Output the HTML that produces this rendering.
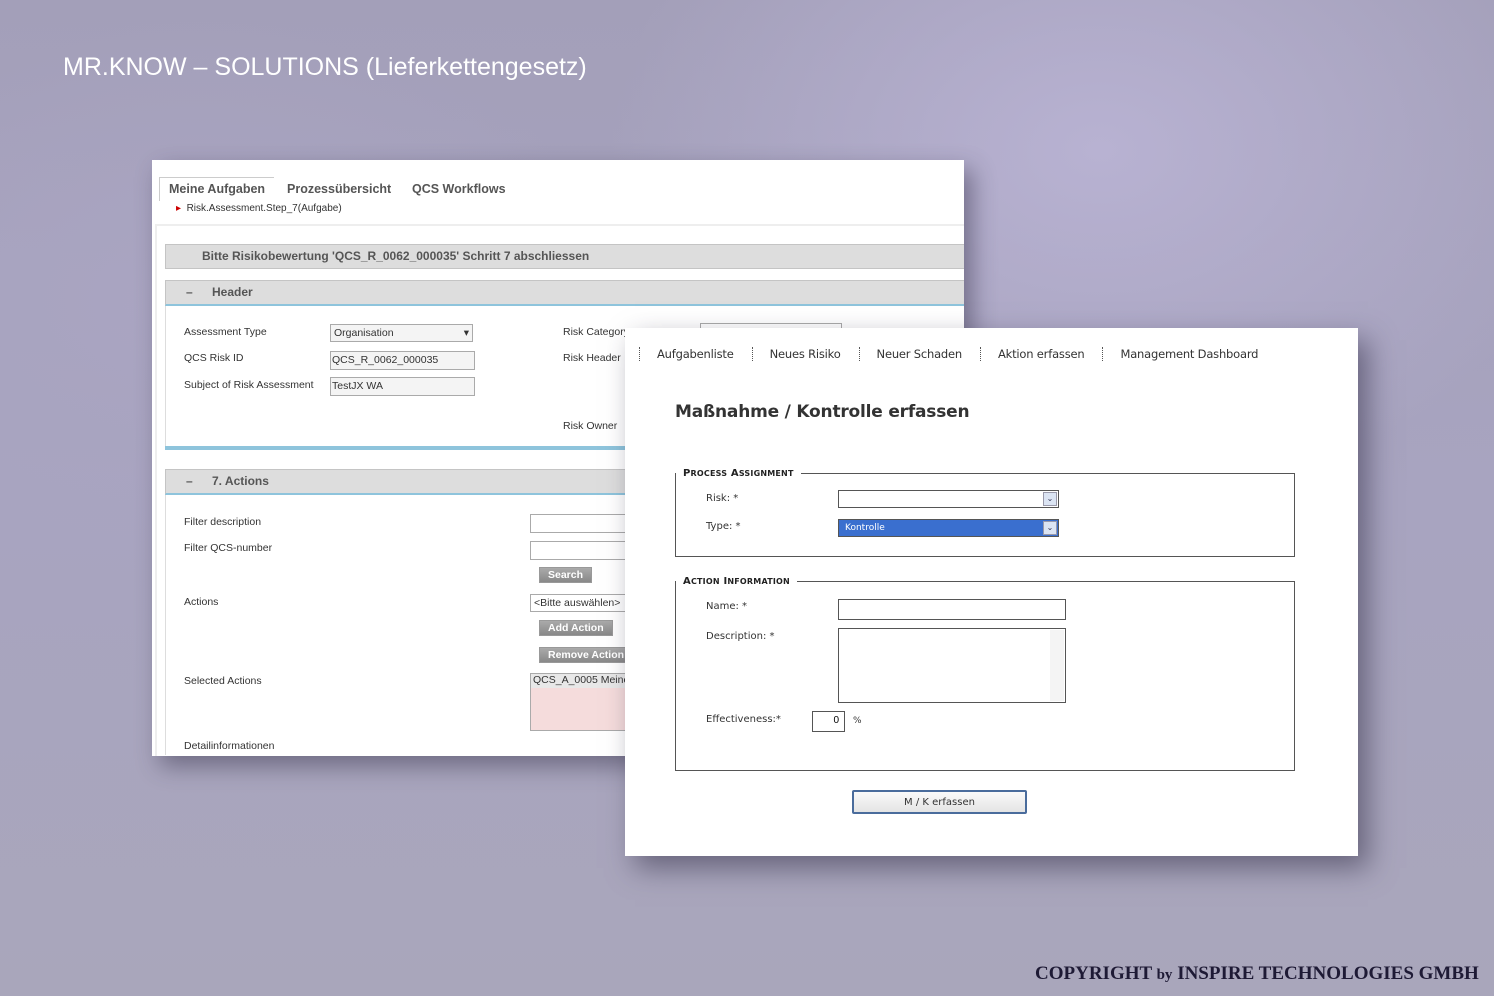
<!DOCTYPE html>
<html><head><meta charset="utf-8"><style>
*{margin:0;padding:0;box-sizing:border-box}
body{width:1494px;height:996px;overflow:hidden;position:relative;font-family:"Liberation Sans",sans-serif;
background:radial-gradient(ellipse 700px 500px at 1100px 150px,#b8b2d2 0%,rgba(184,178,210,0) 70%),
radial-gradient(ellipse 600px 400px at 200px 300px,#aaa5c2 0%,rgba(170,165,194,0) 70%),
linear-gradient(180deg,#a39fb9 0%,#a8a4c0 50%,#a9a6bb 100%);}
.a{position:absolute}
.t{color:#333;font-size:10.5px;font-family:"Liberation Sans",sans-serif}
.p1{left:152px;top:160px;width:812px;height:596px;background:#fff;box-shadow:8px 10px 22px rgba(40,35,60,.45);overflow:hidden}
.p2{left:625px;top:328px;width:733px;height:528px;background:#fff;box-shadow:10px 12px 26px rgba(40,35,60,.5)}
.inp{position:absolute;border:1px solid #aaa;background:#f4f4f4;font-size:10.5px;color:#333;padding:2px 3px;font-family:"Liberation Sans",sans-serif}
.btn{position:absolute;background:linear-gradient(#aaa,#888);color:#fff;font-weight:bold;font-size:10.5px;padding:1px 8px;border:1px solid #999}
.fs{position:absolute;border:1px solid #555;}
.lg{position:absolute;background:#fff;padding:0 7px;font-size:10px;font-weight:bold;color:#222;font-family:"DejaVu Sans",sans-serif;letter-spacing:.2px}
.w{font-family:"DejaVu Sans",sans-serif;font-size:11px;color:#333}
.sel{position:absolute;border:1px solid #555;background:#fff}
.arr{position:absolute;right:1px;top:1px;width:14px;height:14px;background:#dbe4f3;border:1px solid #99a;font-size:8px;color:#335;text-align:center;line-height:12px}
</style></head><body>
<div class="a" style="left:63px;top:53px;color:#fff;font-size:25px">MR.KNOW – SOLUTIONS (Lieferkettengesetz)</div>
<div class="a" style="left:1035px;top:963px;font-family:'Liberation Serif',serif;font-weight:bold;font-size:19px;color:#1e1a35;letter-spacing:0">COPYRIGHT <span style="font-size:15px">by</span> INSPIRE TECHNOLOGIES GMBH</div>

<div class="a p1">
 <div class="a" style="left:7px;top:17px;width:115px;height:24px;border-top:1px solid #ccc;border-left:1px solid #ccc"></div>
 <div class="a" style="left:17px;top:22px;font-size:12.5px;font-weight:bold;color:#555">Meine Aufgaben</div>
 <div class="a" style="left:135px;top:22px;font-size:12.5px;font-weight:bold;color:#555">Prozessübersicht</div>
 <div class="a" style="left:260px;top:22px;font-size:12.5px;font-weight:bold;color:#555">QCS Workflows</div>
 <div class="a" style="left:24px;top:43px;font-size:10px;color:#333"><span style="color:#c00">&#9656;</span>&nbsp; Risk.Assessment.Step_7(Aufgabe)</div>
 <div class="a" style="left:3px;top:64px;width:809px;height:2px;background:#eee"></div>
 <div class="a" style="left:3px;top:66px;width:2px;height:530px;background:#eee"></div>
 <div class="a" style="left:13px;top:84px;width:800px;height:25px;background:#ddd;border:1px solid #c4c4c4;font-size:12px;font-weight:bold;color:#555;padding:4px 0 0 36px">Bitte Risikobewertung 'QCS_R_0062_000035' Schritt 7 abschliessen</div>
 <div class="a" style="left:13px;top:120px;width:800px;height:26px;background:#ddd;border:1px solid #c4c4c4;border-bottom:2px solid #8ec4dc;font-size:12px;font-weight:bold;color:#555;padding:4px 0 0 20px"><span style="display:inline-block;width:26px">–</span>Header</div>
 <div class="a" style="left:13px;top:146px;width:1px;height:140px;background:#ddd"></div>
 <div class="a t" style="left:32px;top:166px">Assessment Type</div>
 <div class="a t" style="left:32px;top:192px">QCS Risk ID</div>
 <div class="a t" style="left:32px;top:219px">Subject of Risk Assessment</div>
 <div class="inp" style="left:178px;top:164px;width:143px;height:18px">Organisation<span style="float:right">▾</span></div>
 <div class="inp" style="left:178px;top:191px;width:145px;height:19px;padding-left:1px">QCS_R_0062_000035</div>
 <div class="inp" style="left:178px;top:217px;width:145px;height:19px;padding-left:1px">TestJX WA</div>
 <div class="a t" style="left:411px;top:166px">Risk Category</div>
 <div class="a t" style="left:411px;top:192px">Risk Header</div>
 <div class="a t" style="left:411px;top:260px">Risk Owner</div>
 <div class="a" style="left:548px;top:163px;width:142px;height:5px;border:1px solid #aaa;border-bottom:none"></div>
 <div class="a" style="left:13px;top:286px;width:800px;height:4px;background:#8ec4dc"></div>
 <div class="a" style="left:13px;top:309px;width:800px;height:26px;background:#ddd;border:1px solid #c4c4c4;border-bottom:2px solid #8ec4dc;font-size:12px;font-weight:bold;color:#555;padding:4px 0 0 20px"><span style="display:inline-block;width:26px">–</span>7. Actions</div>
 <div class="a" style="left:13px;top:335px;width:1px;height:260px;background:#ddd"></div>
 <div class="a t" style="left:32px;top:356px">Filter description</div>
 <div class="a t" style="left:32px;top:382px">Filter QCS-number</div>
 <div class="a t" style="left:32px;top:436px">Actions</div>
 <div class="a t" style="left:32px;top:515px">Selected Actions</div>
 <div class="a t" style="left:32px;top:580px">Detailinformationen</div>
 <div class="inp" style="left:378px;top:354px;width:120px;height:19px;background:#fff"></div>
 <div class="inp" style="left:378px;top:381px;width:120px;height:19px;background:#fff"></div>
 <div class="btn" style="left:387px;top:407px">Search</div>
 <div class="inp" style="left:378px;top:434px;width:120px;height:18px;background:#fff">&lt;Bitte auswählen&gt;</div>
 <div class="btn" style="left:387px;top:460px">Add Action</div>
 <div class="btn" style="left:387px;top:487px;width:100px">Remove Action</div>
 <div class="inp" style="left:378px;top:513px;width:120px;height:58px;background:linear-gradient(#e8e8e8 0,#e8e8e8 14px,#f5dcdc 14px);padding:0 2px">QCS_A_0005 Meine</div>
</div>

<div class="a p2">
 <div class="a w" style="left:14px;top:19px;width:100%;font-size:11.5px;letter-spacing:-.2px">
  <span style="border-left:1px dotted #555;padding:0 0 0 17px"></span>Aufgabenliste<span style="border-left:1px dotted #555;margin:0 17px 0 18px"></span>Neues Risiko<span style="border-left:1px dotted #555;margin:0 17px 0 18px"></span>Neuer Schaden<span style="border-left:1px dotted #555;margin:0 17px 0 18px"></span>Aktion erfassen<span style="border-left:1px dotted #555;margin:0 17px 0 18px"></span>Management Dashboard</div>
 <div class="a" style="left:50px;top:74px;font-family:'DejaVu Sans',sans-serif;font-weight:bold;font-size:17px;color:#333;letter-spacing:-.2px">Maßnahme / Kontrolle erfassen</div>
 <div class="fs" style="left:50px;top:145px;width:620px;height:84px"></div>
 <div class="lg" style="left:51px;top:140px">P<span style="font-size:8px">ROCESS</span> A<span style="font-size:8px">SSIGNMENT</span></div>
 <div class="a w" style="left:81px;top:165px;font-size:10px">Risk: *</div>
 <div class="a w" style="left:81px;top:193px;font-size:10px">Type: *</div>
 <div class="sel" style="left:213px;top:162px;width:221px;height:18px"><div class="arr">⌄</div></div>
 <div class="sel" style="left:213px;top:191px;width:221px;height:18px;background:#3a6fcf"><span style="color:#fff;font-size:9px;position:absolute;left:6px;top:3px;font-family:'DejaVu Sans',sans-serif">Kontrolle</span><div class="arr">⌄</div></div>
 <div class="fs" style="left:50px;top:253px;width:620px;height:190px"></div>
 <div class="lg" style="left:51px;top:248px">A<span style="font-size:8px">CTION</span> I<span style="font-size:8px">NFORMATION</span></div>
 <div class="a w" style="left:81px;top:273px;font-size:10px">Name: *</div>
 <div class="a w" style="left:81px;top:303px;font-size:10px">Description: *</div>
 <div class="a w" style="left:81px;top:386px;font-size:10px">Effectiveness:*</div>
 <div class="sel" style="left:213px;top:271px;width:228px;height:21px"></div>
 <div class="sel" style="left:213px;top:300px;width:228px;height:75px"><div style="position:absolute;right:1px;top:1px;width:14px;bottom:1px;background:#f4f4f4"></div></div>
 <div class="sel" style="left:187px;top:383px;width:33px;height:21px;font-size:10px;text-align:right;padding:3px 5px 0 0">0</div>
 <div class="a w" style="left:228px;top:388px;font-size:9px">%</div>
 <div class="a" style="left:227px;top:462px;width:175px;height:24px;border:2px solid #4a6c9c;border-radius:2px;background:linear-gradient(#fafafa,#e4e4e4);text-align:center;font-size:10px;color:#333;padding-top:5px;font-family:'DejaVu Sans',sans-serif">M / K erfassen</div>
</div>
</body></html>
